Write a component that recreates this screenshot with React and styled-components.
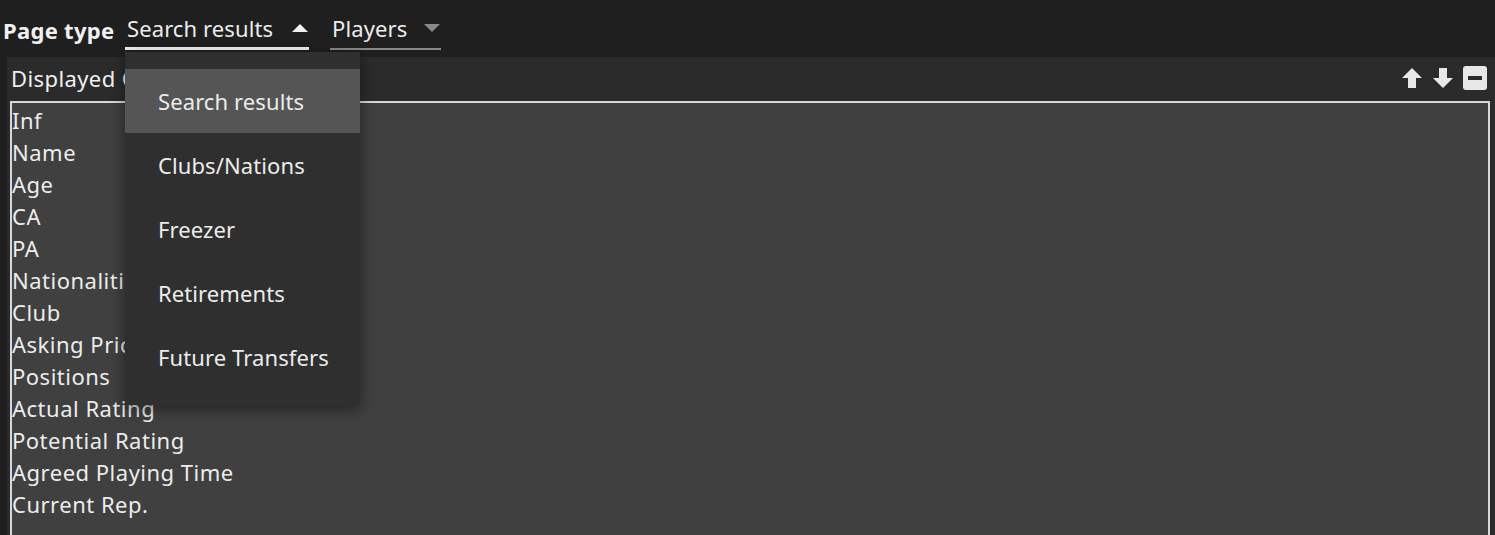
import React from "react"
import styled, { createGlobalStyle } from "styled-components"

const pageTypes = ["Search results", "Clubs/Nations", "Freezer", "Retirements", "Future Transfers"]

const columns = [
  "Inf",
  "Name",
  "Age",
  "CA",
  "PA",
  "Nationalities",
  "Club",
  "Asking Price",
  "Positions",
  "Actual Rating",
  "Potential Rating",
  "Agreed Playing Time",
  "Current Rep.",
]

const UpIcon = () => (
  <svg width="22" height="22" viewBox="0 0 22 22">
    <path d="M11 1 L21 11 L15 11 L15 21 L7 21 L7 11 L1 11 Z" fill="#e8e8e8" />
  </svg>
)

const DownIcon = () => (
  <svg width="22" height="22" viewBox="0 0 22 22">
    <path d="M11 21 L21 11 L15 11 L15 1 L7 1 L7 11 L1 11 Z" fill="#e8e8e8" />
  </svg>
)

const MinusIcon = () => (
  <svg width="24" height="24" viewBox="0 0 24 24">
    <rect x="0" y="0" width="24" height="24" rx="3" fill="#e8e8e8" />
    <rect x="5" y="10" width="14" height="4" fill="#2b2b2b" />
  </svg>
)

const App = () => {
  return (
    <>
      <GlobalStyle />
      <Page>
        <TopBar>
          <Label>Page type</Label>
          <Select width={184} active>
            <span>Search results</span>
            <Caret up active />
            <Menu>
              {pageTypes.map((t, i) => (
                <MenuItem key={t} selected={i === 0}>
                  {t}
                </MenuItem>
              ))}
            </Menu>
          </Select>
          <Select width={111}>
            <span>Players</span>
            <Caret />
          </Select>
        </TopBar>
        <Panel>
          <PanelHeader>
            <Title>Displayed Columns</Title>
            <Tools>
              <UpIcon />
              <DownIcon />
              <MinusIcon />
            </Tools>
          </PanelHeader>
          <ListBox>
            {columns.map((c) => (
              <Row key={c}>{c}</Row>
            ))}
          </ListBox>
        </Panel>
      </Page>
    </>
  )
}

export default App

const GlobalStyle = createGlobalStyle`
  html, body {
    margin: 0;
    padding: 0;
    background: #1f1f1f;
    overflow: hidden;
  }
  body {
    font-family: "Noto Sans", "Open Sans", sans-serif;
    color: #f0f0f0;
  }
`

const Page = styled.div`
  width: 1495px;
  height: 535px;
  display: flex;
  flex-direction: column;
  overflow: hidden;
`

const TopBar = styled.div`
  height: 57px;
  display: flex;
  align-items: flex-start;
  padding-left: 3px;
  flex-shrink: 0;
`

const Label = styled.div`
  width: 122px;
  font-size: 22px;
  font-weight: 700;
  line-height: 24px;
  margin-top: 18px;
  letter-spacing: 0.3px;
  white-space: nowrap;
`

const Select = styled.div`
  position: relative;
  width: ${(p) => p.width}px;
  height: 50px;
  box-sizing: border-box;
  border-bottom: ${(p) => (p.active ? "3px solid #f2f2f2" : "2px solid #8a8a8a")};
  display: flex;
  align-items: center;
  justify-content: space-between;
  padding: 8px 0 0 2px;
  margin-right: 21px;
  font-size: 22px;
  letter-spacing: 0.1px;
  color: #ececec;
`

const Caret = styled.span`
  width: 0;
  height: 0;
  margin-right: 1px;
  border-left: 8px solid transparent;
  border-right: 8px solid transparent;
  ${(p) =>
    p.up
      ? `border-bottom: 8px solid ${p.active ? "#f2f2f2" : "#8a8a8a"};`
      : `border-top: 8px solid ${p.active ? "#f2f2f2" : "#8a8a8a"};`}
`

const Menu = styled.div`
  position: absolute;
  left: 0;
  top: 52px;
  width: 235px;
  padding: 17px 0 16px;
  background: #2f2f2f;
  box-shadow: 0 4px 14px rgba(0, 0, 0, 0.45);
  z-index: 10;
  letter-spacing: 0.1px;
`

const MenuItem = styled.div`
  height: 64px;
  display: flex;
  align-items: center;
  padding-left: 33px;
  font-size: 22px;
  background: ${(p) => (p.selected ? "#555555" : "transparent")};
  color: #ececec;
`

const Panel = styled.div`
  flex: 1;
  margin-left: 7px;
  background: #2b2b2b;
  display: flex;
  flex-direction: column;
  padding: 0 5px 0 3px;
`

const PanelHeader = styled.div`
  height: 44px;
  display: flex;
  align-items: center;
  justify-content: space-between;
`

const Title = styled.div`
  font-size: 22px;
  letter-spacing: 0.4px;
  margin-left: 1px;
  margin-top: -2px;
`

const Tools = styled.div`
  display: flex;
  align-items: center;
  gap: 9px;
  margin-right: 3px;
  margin-top: -2px;
`

const ListBox = styled.div`
  flex: 1;
  border: 2px solid #d8d8d8;
  border-bottom: none;
  background: #404040;
  padding-top: 1px;
`

const Row = styled.div`
  height: 32px;
  line-height: 32px;
  font-size: 22px;
  letter-spacing: 0.5px;
  color: #ececec;
`
